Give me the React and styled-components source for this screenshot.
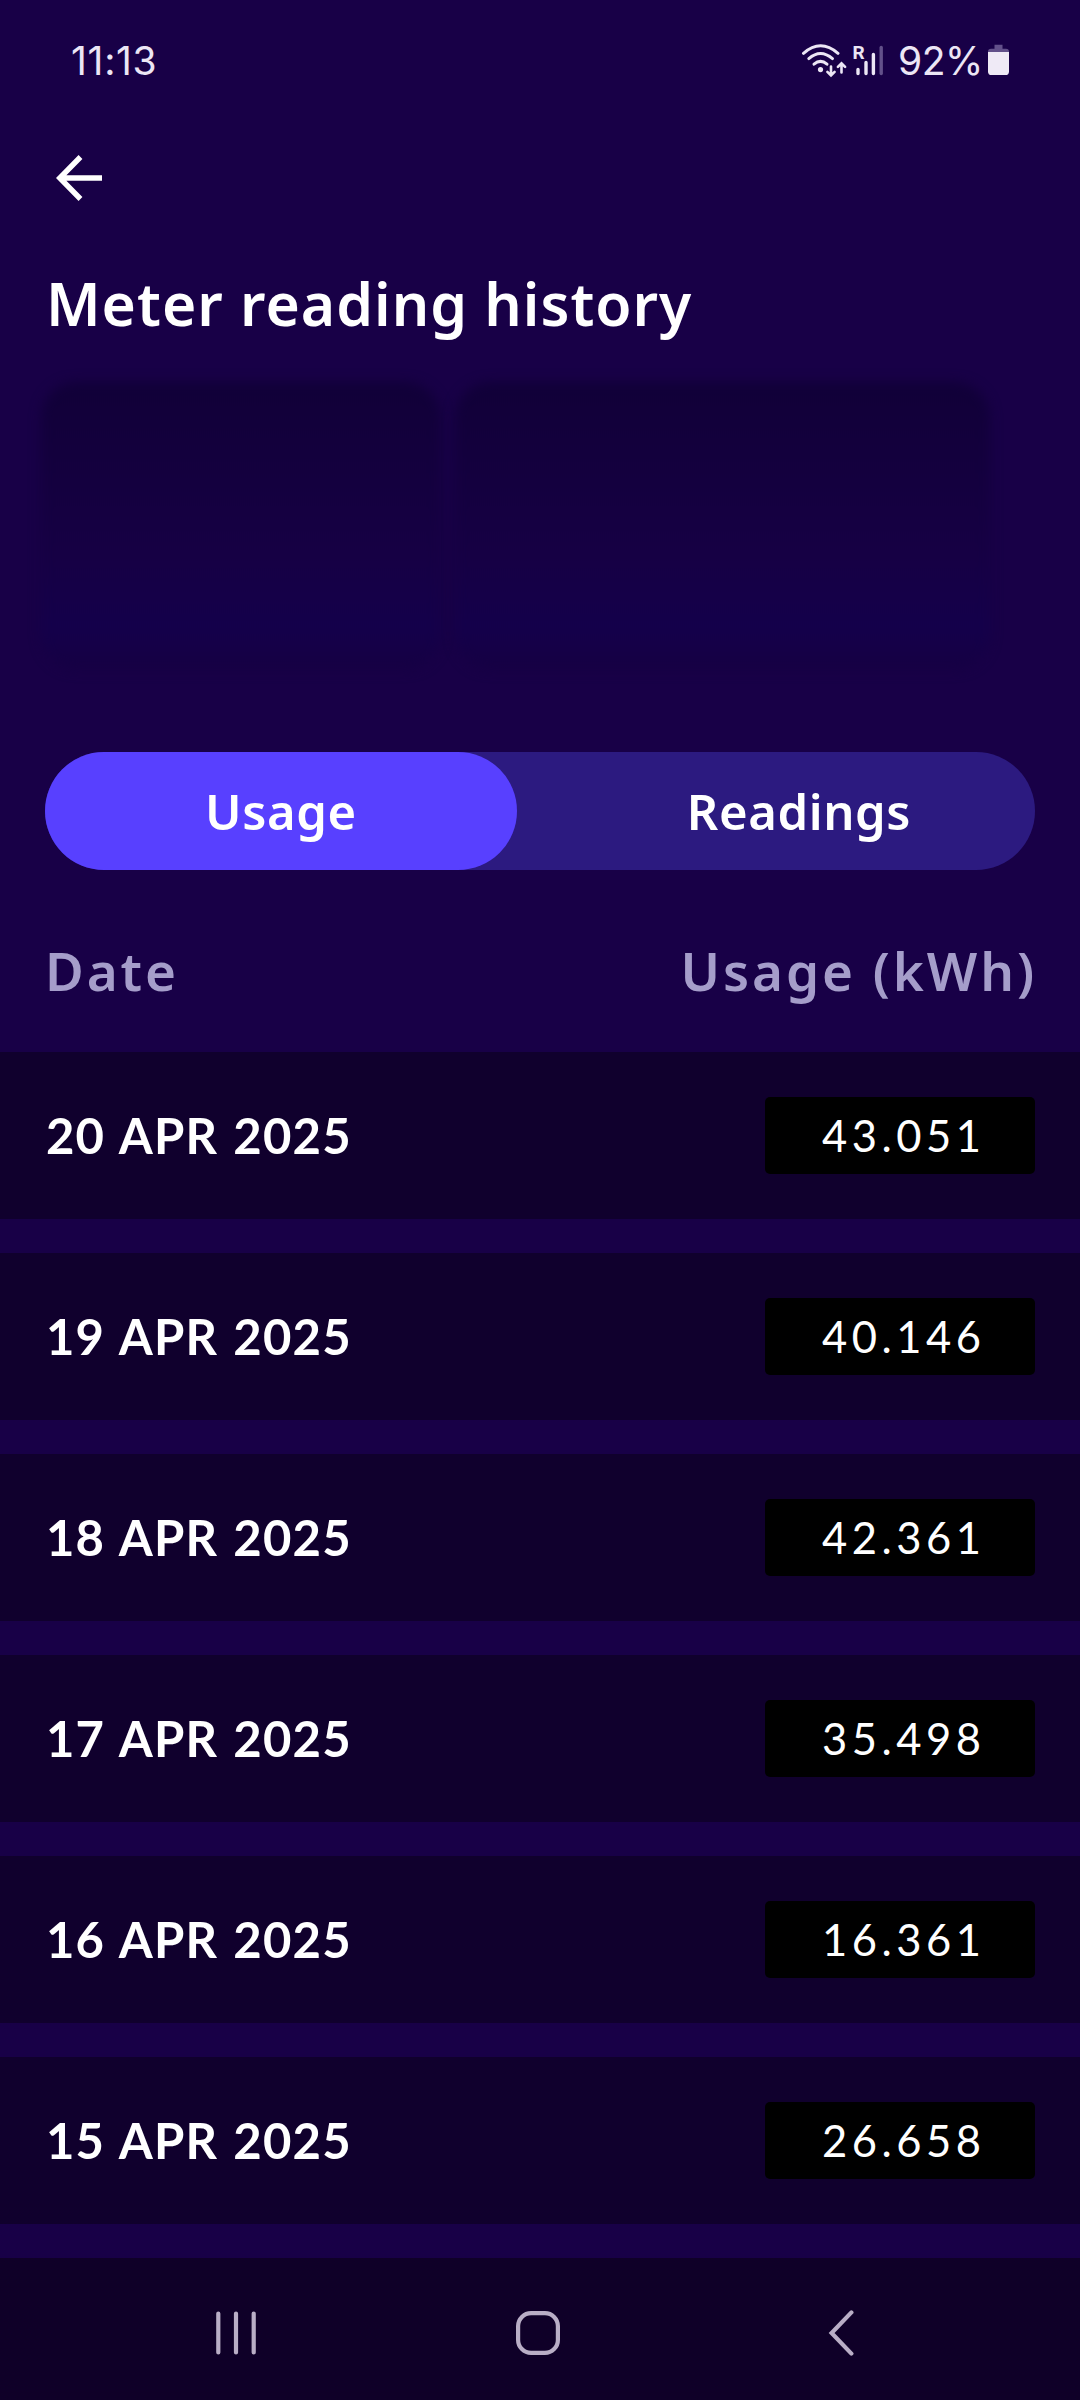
import React, { useState } from 'react';
import styled, { createGlobalStyle } from 'styled-components';

const readings = [
  { date: '20 APR 2025', usage: '43.051' },
  { date: '19 APR 2025', usage: '40.146' },
  { date: '18 APR 2025', usage: '42.361' },
  { date: '17 APR 2025', usage: '35.498' },
  { date: '16 APR 2025', usage: '16.361' },
  { date: '15 APR 2025', usage: '26.658' },
];

const StatusIcons = () => (
  <svg width="86" height="40" viewBox="800 40 86 40" fill="none" stroke="#ece6f5" strokeLinecap="round">
    {/* wifi */}
    <path d="M803.5 53.3 Q820.5 38.3 838 53.3" strokeWidth="3" />
    <path d="M808.8 58.6 Q820.5 48.4 832.5 58.6" strokeWidth="3" />
    <path d="M814 64.2 Q820.5 58.6 827 64.2" strokeWidth="3" />
    <circle cx="820.5" cy="69.6" r="2.6" fill="#ece6f5" stroke="none" />
    <path d="M831 66.5 V75 M827.4 71.8 L831 75.4 L834.6 71.8" strokeWidth="2.6" />
    <path d="M841.5 72.5 V63.5 M837.9 66.9 L841.5 63.3 L845.1 66.9" strokeWidth="2.6" />
    {/* signal */}
    <path d="M858 69.5 V73.5 M866 62.5 V73.5 M873.4 54.5 V73.5" strokeWidth="3.4" />
    <path d="M881.2 47.5 V73.5" strokeWidth="3.4" stroke="#62508a" />
    <text x="852.6" y="58.5" fill="#ece6f5" stroke="none" fontFamily="Roboto, sans-serif" fontWeight="700" fontSize="19">R</text>
  </svg>
);

const BatteryIcon = () => (
  <svg width="22" height="32" viewBox="0 0 22 32">
    <path d="M6.5 0.8 h8 v4 h3.5 q3 0 3 3 v0.4 h-21 v-0.4 q0 -3 3 -3 h3.5 z" fill="#62508a" />
    <path d="M0 8 H21 V27.4 Q21 31 17.4 31 H3.6 Q0 31 0 27.4 Z" fill="#efeaf6" />
  </svg>
);

const BackArrow = () => (
  <svg width="48" height="48" viewBox="0 0 48 48" fill="none" stroke="#fff" strokeWidth="5.4">
    <path d="M25.5 3 L4.8 24 L25.5 45 M5 24 H47" />
  </svg>
);

export default function App() {
  const [tab, setTab] = useState('usage');

  return (
    <Screen>
      <GlobalStyle />
      <StatusBar>
        <Clock>11:13</Clock>
        <StatusIcons />
        <BatteryLevel>92%</BatteryLevel>
        <BatteryIcon />
      </StatusBar>
      <BackButton aria-label="Back">
        <BackArrow />
      </BackButton>
      <Title>Meter reading history</Title>
      <Details>
        <DetailPanel $width={400} />
        <DetailPanel $width={535} />
      </Details>
      <Tabs>
        <Tab $active={tab === 'usage'} onClick={() => setTab('usage')}>Usage</Tab>
        <Tab $active={tab === 'readings'} onClick={() => setTab('readings')}>Readings</Tab>
      </Tabs>
      <ListHeader>
        <span>Date</span>
        <span>Usage (kWh)</span>
      </ListHeader>
      <List>
        {readings.map(({ date, usage }) => (
          <Row key={date}>
            <RowDate>{date}</RowDate>
            <Value>{usage}</Value>
          </Row>
        ))}
      </List>
      <NavBar>
        <svg width="40" height="48" viewBox="0 0 40 48" fill="none" stroke="#b9aec6" strokeWidth="4.2" strokeLinecap="round">
          <path d="M2.3 4.6 V43.4 M20 4.6 V43.4 M37.7 4.6 V43.4" />
        </svg>
        <svg width="44" height="48" viewBox="0 0 44 48" fill="none" stroke="#b9aec6" strokeWidth="4.2">
          <rect x="2.1" y="4.1" width="39.8" height="39.8" rx="13" />
        </svg>
        <svg width="27" height="48" viewBox="0 0 27 48" fill="none" stroke="#b9aec6" strokeWidth="4.2" strokeLinecap="round">
          <path d="M24.4 3.4 L4.6 24 L24.4 44.6" />
        </svg>
      </NavBar>
    </Screen>
  );
}

const GlobalStyle = createGlobalStyle`
  body {
    margin: 0;
    background: #180047;
  }

  button {
    border: 0;
    padding: 0;
    background: none;
    color: inherit;
    font: inherit;
  }

  svg {
    display: block;
    flex-shrink: 0;
  }
`;

const Screen = styled.div`
  width: 1080px;
  height: 2400px;
  overflow: hidden;
  display: flex;
  flex-direction: column;
  background: #180047;
  color: #fff;
  font-family: 'Noto Sans', sans-serif;
`;

const StatusBar = styled.header`
  height: 120px;
  box-sizing: border-box;
  padding: 0 70px 0 71px;
  display: flex;
  align-items: center;
  color: #ece6f5;
  font-family: Inter, sans-serif;
  font-size: 39px;
`;

const Clock = styled.span`
  flex: 1;
  letter-spacing: 0.7px;
`;

const BatteryLevel = styled.span`
  width: 90px;
  margin-left: 12px;
  letter-spacing: -0.5px;
`;

const BackButton = styled.button`
  width: 48px;
  height: 48px;
  margin: 34px 0 0 55px;
`;

const Title = styled.h1`
  margin: 61px 0 0 46px;
  font-size: 58.8px;
  line-height: 80px;
  font-weight: 600;
  letter-spacing: 1px;
  white-space: nowrap;
`;

const Details = styled.section`
  display: flex;
  gap: 14px;
  height: 288px;
  margin: 39px 0 0 41px;
`;

const DetailPanel = styled.div`
  width: ${({ $width }) => $width}px;
  border-radius: 36px;
  background: linear-gradient(#110038 0%, #14003f 35%, #160044 60%, #14004b 85%, #160043 100%);
  filter: blur(6px);
`;

const Tabs = styled.div`
  display: flex;
  justify-content: space-between;
  width: 990px;
  height: 118px;
  margin: 82px 0 0 45px;
  border-radius: 59px;
  background: #2c1a80;
`;

const Tab = styled.button`
  width: 472px;
  border-radius: 59px;
  background: ${({ $active }) => ($active ? '#5840ff' : 'transparent')};
  font-size: 49px;
  font-weight: 600;
  letter-spacing: 0.6px;
`;

const ListHeader = styled.div`
  display: flex;
  justify-content: space-between;
  align-items: center;
  height: 182px;
  padding: 18px 43px 0 45px;
  box-sizing: border-box;
  color: #a59dca;
  font-size: 53px;
  font-weight: 600;
  letter-spacing: 2.9px;
`;

const List = styled.div`
  display: flex;
  flex-direction: column;
  gap: 34px;
`;

const Row = styled.div`
  display: flex;
  justify-content: space-between;
  align-items: center;
  height: 167px;
  padding: 0 45px;
  box-sizing: border-box;
  background: #10002d;
`;

const RowDate = styled.span`
  padding: 0 0 2px 1px;
  font-family: Lato, sans-serif;
  font-size: 49px;
  font-weight: 700;
  letter-spacing: 1.2px;
  word-spacing: 2px;
`;

const Value = styled.span`
  width: 270px;
  height: 77px;
  box-sizing: border-box;
  padding-left: 57px;
  border-radius: 5px;
  background: #000;
  font-family: Lato, sans-serif;
  font-size: 43.5px;
  line-height: 77px;
  letter-spacing: 4.5px;
`;

const NavBar = styled.nav`
  display: flex;
  align-items: center;
  height: 142px;
  margin-top: 34px;
  padding: 8px 0 0 216px;
  gap: 260px;
  box-sizing: border-box;
  background: #0f0028;

  svg:last-child {
    margin-left: 7px;
  }
`;
